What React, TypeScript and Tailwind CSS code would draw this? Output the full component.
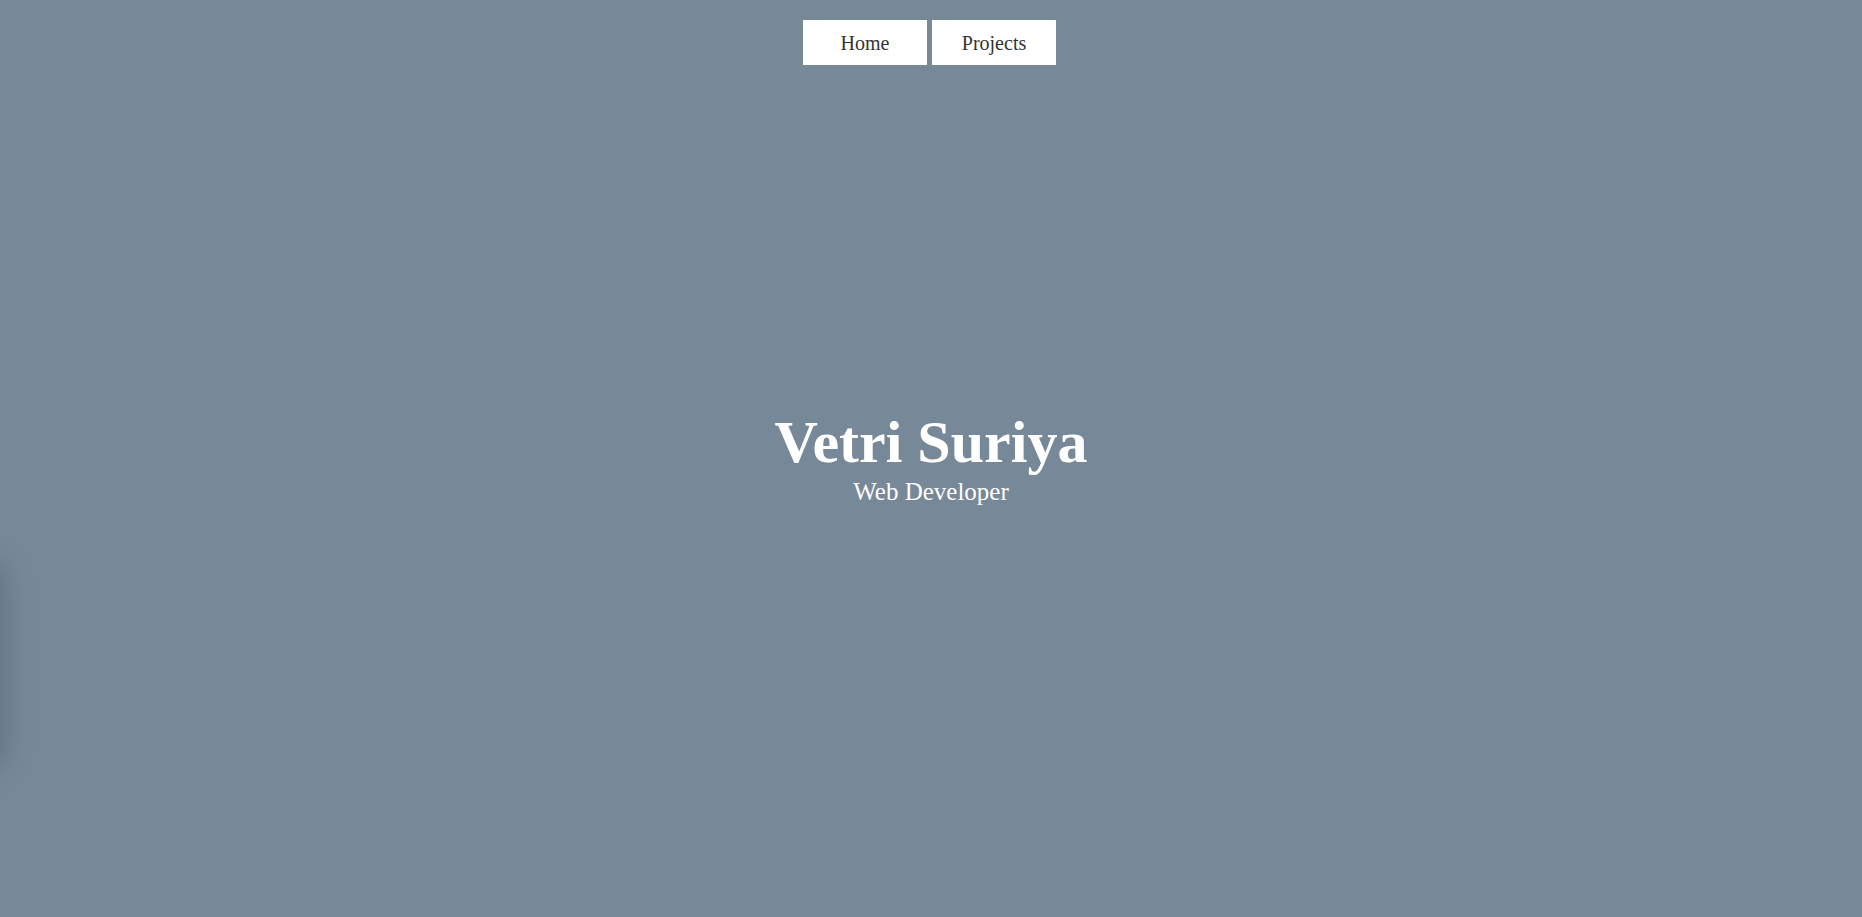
export default function App() {
  return (
    <div className="relative h-screen w-full overflow-hidden bg-[#778899] font-['Liberation_Serif',serif]">
      {/* faint shadow creeping in from the left edge */}
      <div className="pointer-events-none absolute left-[-46px] top-[560px] h-[210px] w-[50px] rounded-full bg-[#3a4a5c]/40 blur-[14px]" />

      <nav className="absolute inset-x-0 top-[20px] flex justify-center gap-[5px] pr-[3px]">
        <a href="#" className="flex h-[45px] w-[124px] items-center justify-center bg-white text-[20px] text-[#333]">
          Home
        </a>
        <a href="#" className="flex h-[45px] w-[124px] items-center justify-center bg-white text-[20px] text-[#333]">
          Projects
        </a>
      </nav>

      <main className="flex h-full flex-col items-center justify-center pt-[1px] text-white">
        <h1 className="text-[60px] font-bold leading-[60px]">Vetri Suriya</h1>
        <p className="mt-[6px] text-[25px] leading-[28px]">Web Developer</p>
      </main>
    </div>
  );
}
